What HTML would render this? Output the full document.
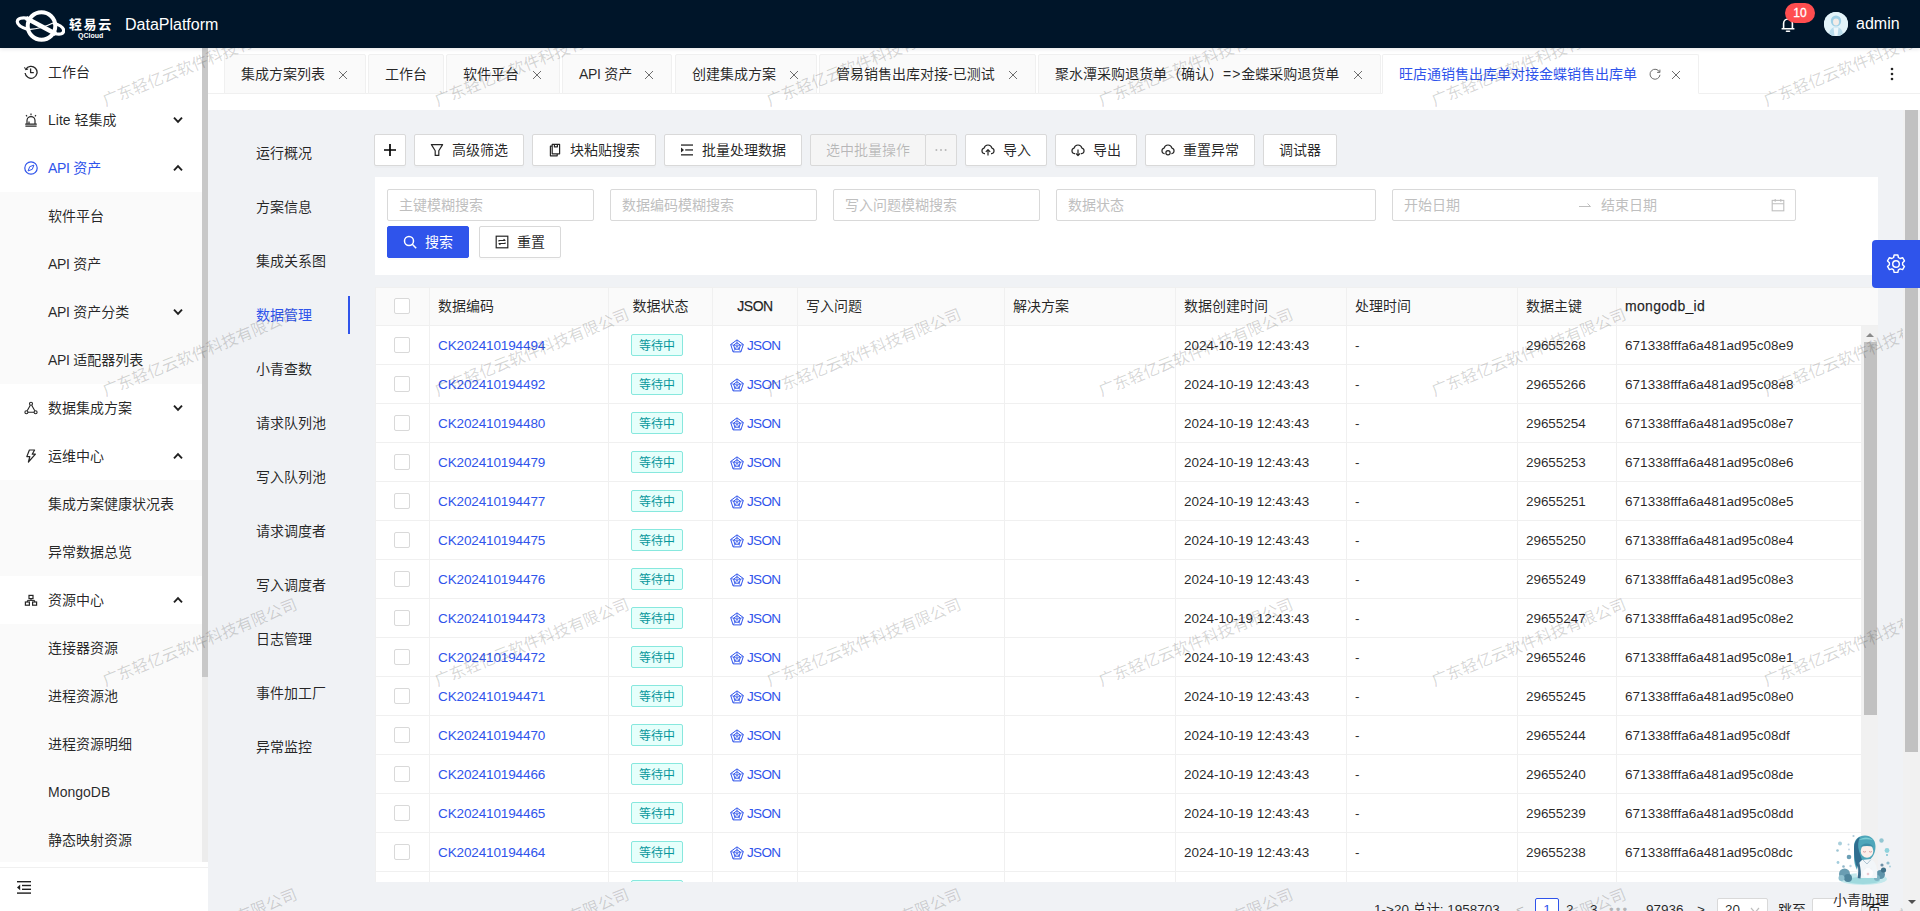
<!DOCTYPE html>
<html lang="zh-CN">
<head>
<meta charset="utf-8">
<title>DataPlatform</title>
<style>
*{box-sizing:border-box;margin:0;padding:0}
html,body{width:1920px;height:911px;overflow:hidden}
body{position:relative;background:#f0f2f5;font:14px/22px "Liberation Sans","Noto Sans CJK SC",sans-serif;color:rgba(0,0,0,.85)}
a{color:#2f54eb;text-decoration:none}
svg{display:block}
.abs{position:absolute}

/* ---------- header ---------- */
#hd{position:absolute;left:0;top:0;width:1920px;height:48px;background:#001529;z-index:30;box-shadow:0 1px 4px rgba(0,21,41,.12)}
#hd .logo{position:absolute;left:15px;top:9px;width:50px;height:34px}
#hd .brand{position:absolute;left:69px;top:15px;font-size:13px;line-height:20px;font-weight:700;color:#fff;letter-spacing:1.6px;white-space:nowrap}
#hd .qc{position:absolute;left:78px;top:31px;font-size:7px;line-height:9px;font-weight:700;color:#fff;white-space:nowrap}
#hd .title{position:absolute;left:125px;top:13px;font-size:16px;line-height:24px;color:#fff;white-space:nowrap}
#hd .bell{position:absolute;left:1780px;top:16px;width:16px;height:17px}
#hd .badge{position:absolute;left:1785px;top:3px;width:30px;height:20px;border-radius:10px;background:#ff4d4f;color:#fff;font-size:12px;line-height:20px;text-align:center;-webkit-text-stroke:.3px #fff}
#hd .avatar{position:absolute;left:1824px;top:12px;width:24px;height:24px;border-radius:50%;overflow:hidden;background:#dff1f8}
#hd .user{position:absolute;left:1856px;top:12px;font-size:16px;line-height:24px;color:#fff}

/* ---------- sidebar ---------- */
#sd{position:absolute;left:0;top:48px;width:208px;height:863px;background:#fff;z-index:20}
#sd .mi{position:absolute;left:0;width:202px;height:48px;line-height:48px;padding-left:48px;white-space:nowrap}
#sd .sub{position:absolute;left:0;width:202px;background:#fafafa}
#sd .mi.on{color:#2f54eb}
#sd .ic{position:absolute;left:24px;top:17px;width:14px;height:14px}
#sd .ar{position:absolute;left:173px;top:20px;width:10px;height:8px}
#sd .sbt{position:absolute;left:202px;top:0;width:6px;height:814px;background:#ececec}
#sd .sbh{position:absolute;left:202px;top:0;width:6px;height:629px;background:#c8c8c8}
#sd .foot{position:absolute;left:0;top:819px;width:208px;height:44px;border-top:1px solid #f0f0f0;background:#fff}
#sd .foot svg{position:absolute;left:17px;top:13px;width:14px;height:13px}

/* ---------- tabs ---------- */
#tb{position:absolute;left:208px;top:48px;width:1712px;height:62px;background:#fff;z-index:10}
#tb .line{position:absolute;left:0;top:45px;width:1712px;height:1px;background:#f0f0f0}
#tb .t{position:absolute;top:6px;height:40px;padding:8px 0 0 16px;border:1px solid #f0f0f0;background:#fafafa;border-radius:2px 2px 0 0;white-space:nowrap;line-height:22px}
#tb .t.on{background:#fff;border-bottom-color:#fff;color:#2f54eb}
#tb .x{position:absolute;top:15px;width:10px;height:10px}
#tb .more{position:absolute;left:1682px;top:19px;width:4px;height:14px}

/* ---------- inner menu ---------- */
#im .it{position:absolute;left:256px;height:22px;white-space:nowrap}
#im .it.on{color:#2f54eb}
#im .bar{position:absolute;left:348px;top:296px;width:2px;height:38px;background:#2f54eb}

/* ---------- buttons ---------- */
.btn{position:absolute;top:134px;height:32px;background:#fff;border:1px solid #d9d9d9;border-radius:2px;box-shadow:0 2px 0 rgba(0,0,0,.015);line-height:22px;padding:4px 0 0 15px;white-space:nowrap}
.btn svg{position:absolute;left:15px;top:8px;width:14px;height:14px}
.btn.i{padding-left:37px}
.btn.dis{background:#f5f5f5;color:rgba(0,0,0,.25);box-shadow:none}
.btn.pri{background:#2f54eb;border-color:#2f54eb;color:#fff}

/* ---------- search card ---------- */
#sc{position:absolute;left:375px;top:177px;width:1503px;height:98px;background:#fff}
.inp{position:absolute;top:12px;height:32px;border:1px solid #d9d9d9;border-radius:2px;background:#fff;padding:4px 11px;color:#bfbfbf;white-space:nowrap}

/* ---------- table ---------- */
#th{position:absolute;left:375px;top:287px;width:1503px;height:39px;background:#fafafa;border-top:1px solid #f0f0f0;border-bottom:1px solid #f0f0f0;border-left:1px solid #f0f0f0}
#th .h{position:absolute;top:0;height:37px;padding:7px 8px 0;border-right:1px solid #f0f0f0;white-space:nowrap}
.tbody{position:absolute;left:375px;top:326px;width:1486px;height:556px;overflow:hidden;background:#fff;border-left:1px solid #f0f0f0}
.tr{position:relative;height:39px;border-bottom:1px solid #f0f0f0}
.td{position:absolute;top:0;height:38px;padding:8px 8px 0;border-right:1px solid #f0f0f0;white-space:nowrap}
.c0{left:0;width:54px}.c1{left:54px;width:179px}.c2{left:233px;width:104px}.c3{left:337px;width:85px}.c4{left:422px;width:207px}
.c5{left:629px;width:171px}.c6{left:800px;width:171px}.c7{left:971px;width:171px}.c8{left:1142px;width:99px}.c9{left:1241px;width:245px}
.cb{position:absolute;left:18px;top:11px;width:16px;height:16px;border:1px solid #d9d9d9;border-radius:2px;background:#fff}
.tag{position:absolute;left:22px;top:8px;width:52px;height:22px;border:1px solid #87e8de;background:#e6fffb;color:#08979c;border-radius:2px;font-size:12px;line-height:22px;text-align:center}
.c3 a{position:absolute;left:17px;top:8px;height:22px}
.c3 a span{position:absolute;left:17px;top:1px;letter-spacing:-.65px}
.radar{position:absolute;left:0;top:5px;width:14px;height:14px;fill:none;stroke:#2f54eb;stroke-width:1;stroke-linejoin:round}
#vs{position:absolute;left:1861px;top:326px;width:17px;height:556px;background:#f1f1f1}
#vs .thumb{position:absolute;left:3px;top:16px;width:13px;height:373px;background:#c1c1c1}
#vs .up{position:absolute;left:5px;top:7px;width:0;height:0;border:4px solid transparent;border-top:0;border-bottom:4px solid #8a8a8a}

/* ---------- misc ---------- */
#ms{position:absolute;left:1903px;top:110px;width:17px;height:801px;background:#f1f1f1;z-index:26}
#ms .thumb{position:absolute;left:2px;top:0;width:13px;height:642px;background:#c1c1c1}
#ms .dn{position:absolute;left:5px;top:790px;width:0;height:0;border:4px solid transparent;border-bottom:0;border-top:4px solid #505050}
#gear{position:absolute;left:1872px;top:240px;width:48px;height:48px;background:#2f54eb;border-radius:4px 0 0 4px;z-index:40}
#gear svg{position:absolute;left:13px;top:13px;width:22px;height:22px}
#pg{position:absolute;left:-1px;top:898px;width:1920px;height:24px;font-size:13.5px;line-height:24px}
#pg span{position:absolute;top:0;white-space:nowrap}
#xq{position:absolute;left:1830px;top:832px;width:62px;height:79px;z-index:41}
#xq .lbl{position:absolute;left:0;top:57px;width:62px;text-align:center;font-size:14px;line-height:22px;white-space:nowrap}
.wm{position:absolute;z-index:25;font-size:16px;line-height:16px;white-space:nowrap;pointer-events:none}

body{font-variant-ligatures:none}
.c1 a,.c6,.c7,.c8,.c9,.c3 a span{font-size:13.5px}
.c1 a{letter-spacing:-.12px}.c8{letter-spacing:-.05px}.c9{letter-spacing:.04px}
.sb{-webkit-text-stroke:.25px currentColor}
.l{letter-spacing:-.4px}
.wm{width:208px;height:16px;transform-origin:50% 50%;transform:rotate(-22deg);color:rgba(0,0,0,.17);text-align:center}
.c6,.c7,.c8,.c9{padding-top:9px}

</style>
</head>
<body>
<div id="hd">
  <svg class="logo" viewBox="0 0 50 34" fill="none" stroke="#fff">
    <circle cx="26.5" cy="17" r="13.8" stroke-width="4"/>
    <path d="M13.500 9.500C7 8 2.500 9.500 2.300 12.500 2 16 8 19 13 20.500M39.500 24.500c6.500 1.500 9 0 9.200-2.500C49 19 45 16 38 13.800" stroke-width="3.200"/>
    <path d="M11 9 41 25" stroke-width="4.600"/>
    <path d="M14 20.500c8-.5 16-2.500 24-6.500" stroke-width="1.300"/>
  </svg>
  <div class="brand">轻易云</div>
  <div class="qc">QCloud</div>
  <div class="title">DataPlatform</div>
  <svg class="bell" viewBox="0 0 16 17" fill="none" stroke="#fff" stroke-width="1.6" stroke-linejoin="round"><path d="M3.6 12.6V7.4a4.4 4.4 0 0 1 8.8 0v5.2M1.6 12.8h12.8"/><path d="M6.5 15.3h3" stroke-linecap="round"/></svg>
  <div class="badge">10</div>
  <div class="avatar"><svg viewBox="0 0 24 24" width="24" height="24"><rect width="24" height="24" fill="#e3f4fa"/><ellipse cx="12" cy="9" rx="5.2" ry="5.6" fill="#9fd0e6"/><ellipse cx="12" cy="10" rx="3" ry="3.4" fill="#f3ece8"/><path d="M5 24c0-6 3-9 7-9s7 3 7 9z" fill="#b9dcec"/><path d="M9.5 15.5h5l-1 8.5h-3z" fill="#eef7fb"/></svg></div>
  <div class="user">admin</div>
</div>

<div id="sd">
  <div class="sub" style="top:144px;height:192px"></div>
  <div class="sub" style="top:432px;height:96px"></div>
  <div class="sub" style="top:576px;height:238px"></div>

  <div class="mi" style="top:0">
    <svg class="ic" viewBox="0 0 14 14" fill="none" stroke="#262626" stroke-width="1.3"><path d="M1.800 4.400A6 6 0 1 1 1.100 8"/><path d="M.6 2.200l1 2.600 2.600-.8" stroke-width="1"/><path d="M6.600 3.600V7.600h3.200" stroke-linejoin="round"/></svg>工作台</div>
  <div class="mi" style="top:48px">
    <svg class="ic" viewBox="0 0 14 14" fill="none" stroke="#262626" stroke-width="1.2"><path d="M3 11V7.6a4 4 0 0 1 8 0V11M1.4 13.2h11.2M1.2 11.2h11.6M7 .6v1.6M2 2.2l1.1 1.1M12 2.2l-1.1 1.1M5 10.8V8.4"/></svg>Lite 轻集成
    <svg class="ar" viewBox="0 0 10 8" fill="none" stroke="#1f1f1f" stroke-width="1.9"><path d="M1 1.6 5 5.8 9 1.6"/></svg></div>
  <div class="mi on" style="top:96px">
    <svg class="ic" viewBox="0 0 14 14" fill="none" stroke="#2f54eb" stroke-width="1.2"><circle cx="7" cy="7" r="6.2"/><path d="M9.9 4.1 8.3 8.3 4.1 9.9 5.7 5.7Z" stroke-width="1" stroke-linejoin="round"/></svg><span class="l">API</span> 资产
    <svg class="ar" viewBox="0 0 10 8" fill="none" stroke="#1f1f1f" stroke-width="1.9"><path d="M1 6.4 5 2.2 9 6.4"/></svg></div>
  <div class="mi" style="top:144px">软件平台</div>
  <div class="mi" style="top:192px"><span class="l">API</span> 资产</div>
  <div class="mi" style="top:240px"><span class="l">API</span> 资产分类
    <svg class="ar" viewBox="0 0 10 8" fill="none" stroke="#1f1f1f" stroke-width="1.9"><path d="M1 1.6 5 5.8 9 1.6"/></svg></div>
  <div class="mi" style="top:288px"><span class="l">API</span> 适配器列表</div>
  <div class="mi" style="top:336px">
    <svg class="ic" viewBox="0 0 14 14" fill="none" stroke="#262626" stroke-width="1.1"><circle cx="7" cy="2.800" r="1.500"/><circle cx="2.400" cy="11.200" r="1.500"/><circle cx="11.600" cy="11.200" r="1.500"/><path d="M6.300 4.200 3.200 9.800M7.700 4.200l3.100 5.600M4 11.200h6"/></svg>数据集成方案
    <svg class="ar" viewBox="0 0 10 8" fill="none" stroke="#1f1f1f" stroke-width="1.9"><path d="M1 1.6 5 5.8 9 1.6"/></svg></div>
  <div class="mi" style="top:384px">
    <svg class="ic" viewBox="0 0 14 14" fill="none" stroke="#262626" stroke-width="1.2" stroke-linejoin="round"><path d="M5.4 1h5.2L8.2 5.2h3.2L4.4 13l1.4-5.4H2.8Z"/></svg>运维中心
    <svg class="ar" viewBox="0 0 10 8" fill="none" stroke="#1f1f1f" stroke-width="1.9"><path d="M1 6.4 5 2.2 9 6.4"/></svg></div>
  <div class="mi" style="top:432px">集成方案健康状况表</div>
  <div class="mi" style="top:480px">异常数据总览</div>
  <div class="mi" style="top:528px">
    <svg class="ic" viewBox="0 0 14 14" fill="none" stroke="#262626" stroke-width="1.2"><rect x="5" y="2.400" width="4" height="3.200"/><rect x="1.400" y="9" width="4" height="3.200"/><rect x="8.600" y="9" width="4" height="3.200"/><path d="M7 5.600v1.800M3.400 9V7.400h7.200V9" stroke-width="1"/></svg>资源中心
    <svg class="ar" viewBox="0 0 10 8" fill="none" stroke="#1f1f1f" stroke-width="1.9"><path d="M1 6.4 5 2.2 9 6.4"/></svg></div>
  <div class="mi" style="top:576px">连接器资源</div>
  <div class="mi" style="top:624px">进程资源池</div>
  <div class="mi" style="top:672px">进程资源明细</div>
  <div class="mi" style="top:720px">MongoDB</div>
  <div class="mi" style="top:768px">静态映射资源</div>
  <div class="sbt"></div><div class="sbh"></div>
  <div class="foot"><svg viewBox="0 0 14 13" fill="#1f1f1f"><rect x="0" y="0" width="14" height="1.4"/><rect x="5" y="3.8" width="9" height="1.4"/><rect x="5" y="7.6" width="9" height="1.4"/><rect x="0" y="11.4" width="14" height="1.4"/><path d="M3.2 3.6v5.6L0 6.4z"/></svg></div>
</div>

<div id="tb">
  <div class="line"></div>
  <div class="t" style="left:16px;width:142px">集成方案列表<svg class="x" style="right:17px" viewBox="0 0 10 10" stroke="#6e6e6e" stroke-width="1"><path d="M1 1l8 8M9 1 1 9"/></svg></div>
  <div class="t" style="left:160px;width:76px">工作台</div>
  <div class="t" style="left:238px;width:114px">软件平台<svg class="x" style="right:17px" viewBox="0 0 10 10" stroke="#6e6e6e" stroke-width="1"><path d="M1 1l8 8M9 1 1 9"/></svg></div>
  <div class="t" style="left:354px;width:110px"><span class="l">API</span> 资产<svg class="x" style="right:17px" viewBox="0 0 10 10" stroke="#6e6e6e" stroke-width="1"><path d="M1 1l8 8M9 1 1 9"/></svg></div>
  <div class="t" style="left:467px;width:142px">创建集成方案<svg class="x" style="right:17px" viewBox="0 0 10 10" stroke="#6e6e6e" stroke-width="1"><path d="M1 1l8 8M9 1 1 9"/></svg></div>
  <div class="t" style="left:611px;width:217px">管易销售出库对接-已测试<svg class="x" style="right:17px" viewBox="0 0 10 10" stroke="#6e6e6e" stroke-width="1"><path d="M1 1l8 8M9 1 1 9"/></svg></div>
  <div class="t" style="left:830px;width:343px">聚水潭采购退货单（确认）<span style="letter-spacing:1px">=&gt;</span>金蝶采购退货单<svg class="x" style="right:17px" viewBox="0 0 10 10" stroke="#6e6e6e" stroke-width="1"><path d="M1 1l8 8M9 1 1 9"/></svg></div>
  <div class="t on" style="left:1174px;width:317px">旺店通销售出库单对接金蝶销售出库单<svg class="x" style="right:37px;width:12px;height:12px;top:13px" viewBox="0 0 12 12" fill="none" stroke="#6e6e6e" stroke-width="1"><path d="M10.6 4.2A5 5 0 1 0 11 6.8M10.9 1.6v2.8H8.1"/></svg><svg class="x" style="right:17px" viewBox="0 0 10 10" stroke="#6e6e6e" stroke-width="1"><path d="M1 1l8 8M9 1 1 9"/></svg></div>
  <svg class="more" viewBox="0 0 4 14" fill="#262626"><circle cx="2" cy="2" r="1.3"/><circle cx="2" cy="7" r="1.3"/><circle cx="2" cy="12" r="1.3"/></svg>
</div>

<div id="im">
  <div class="it" style="top:142px">运行概况</div>
  <div class="it" style="top:196px">方案信息</div>
  <div class="it" style="top:250px">集成关系图</div>
  <div class="it on" style="top:304px">数据管理</div>
  <div class="bar"></div>
  <div class="it" style="top:358px">小青查数</div>
  <div class="it" style="top:412px">请求队列池</div>
  <div class="it" style="top:466px">写入队列池</div>
  <div class="it" style="top:520px">请求调度者</div>
  <div class="it" style="top:574px">写入调度者</div>
  <div class="it" style="top:628px">日志管理</div>
  <div class="it" style="top:682px">事件加工厂</div>
  <div class="it" style="top:736px">异常监控</div>
</div>

<div class="btn" style="left:374px;width:32px;padding:0"><svg style="left:8px;top:8px" viewBox="0 0 14 14" stroke="#000" stroke-width="1.7"><path d="M7 1v12M1 7h12"/></svg></div>
<div class="btn i" style="left:414px;width:110px"><svg viewBox="0 0 14 14" fill="none" stroke="#262626" stroke-width="1.2" stroke-linejoin="round"><path d="M1.4 1.6h11.2L8.8 7.8v4.6H5.2V7.8Z"/></svg>高级筛选</div>
<div class="btn i" style="left:532px;width:124px"><svg viewBox="0 0 14 14" fill="none" stroke="#262626" stroke-width="1.2" stroke-linejoin="round"><path d="M4.2 3.2H2.4v9.6h6.8V11M4.2 1.4h7.4v9.4H4.2ZM6.4 1.4v2.4h3V1.4"/></svg>块粘贴搜索</div>
<div class="btn i" style="left:664px;width:138px"><svg viewBox="0 0 14 14" fill="#262626"><rect x="1" y="1.4" width="12" height="1.3"/><rect x="5.2" y="6.3" width="7.8" height="1.3"/><rect x="1" y="11.2" width="12" height="1.3"/><path d="M1 4.6 4 7 1 9.4z"/></svg>批量处理数据</div>
<div class="btn dis" style="left:810px;width:116px">选中批量操作</div>
<div class="btn dis" style="left:925px;width:32px;padding:0"><svg style="left:8px;top:8px" viewBox="0 0 14 14" fill="rgba(0,0,0,.25)"><circle cx="2.400" cy="7" r="1"/><circle cx="7" cy="7" r="1"/><circle cx="11.600" cy="7" r="1"/></svg></div>
<div class="btn i" style="left:965px;width:82px"><svg viewBox="0 0 14 14" fill="none" stroke="#262626" stroke-width="1.2" stroke-linejoin="round"><path d="M4 10.6H3.4a2.8 2.8 0 0 1-.3-5.5 4 4 0 0 1 7.8 0 2.8 2.8 0 0 1-.3 5.500H10M7 12.6V6.8M4.8 8.8 7 6.6l2.200 2.200"/></svg>导入</div>
<div class="btn i" style="left:1055px;width:82px"><svg viewBox="0 0 14 14" fill="none" stroke="#262626" stroke-width="1.2" stroke-linejoin="round"><path d="M4 10.6H3.4a2.8 2.8 0 0 1-.3-5.5 4 4 0 0 1 7.8 0 2.8 2.8 0 0 1-.3 5.500H10M7 6.600V12.400M4.800 10.400 7 12.600l2.200-2.200"/></svg>导出</div>
<div class="btn i" style="left:1145px;width:110px"><svg viewBox="0 0 14 14" fill="none" stroke="#262626" stroke-width="1.2" stroke-linejoin="round"><path d="M3.600 10.600H3.400a2.800 2.800 0 0 1-.3-5.500 4 4 0 0 1 7.800 0 2.800 2.800 0 0 1-.3 5.500H10.400"/><circle cx="7" cy="9.800" r="2.100"/></svg>重置异常</div>
<div class="btn" style="left:1263px;width:74px">调试器</div>

<div id="sc">
  <div class="inp" style="left:12px;width:207px">主键模糊搜索</div>
  <div class="inp" style="left:235px;width:207px">数据编码模糊搜索</div>
  <div class="inp" style="left:458px;width:207px">写入问题模糊搜索</div>
  <div class="inp" style="left:681px;width:320px">数据状态</div>
  <div class="inp" style="left:1017px;width:404px">开始日期<span style="position:absolute;left:208px;top:4px">结束日期</span>
    <svg style="position:absolute;left:185px;top:9px;width:14px;height:12px" viewBox="0 0 14 12" fill="none" stroke="#bfbfbf" stroke-width="1"><path d="M1 7.500h11.500M9.500 4.500l3 3"/></svg>
    <svg style="position:absolute;left:378px;top:8px;width:14px;height:14px" viewBox="0 0 14 14" fill="none" stroke="#bfbfbf" stroke-width="1.100"><rect x="1.200" y="2.400" width="11.600" height="10.400"/><path d="M1.200 5.800h11.600M4.200 1v2.800M9.800 1v2.800"/></svg>
  </div>
  <div class="btn pri i" style="left:12px;top:49px;width:82px"><svg viewBox="0 0 14 14" fill="none" stroke="#fff" stroke-width="1.500"><circle cx="6" cy="6" r="4.500"/><path d="M9.300 9.300 13.200 13.200"/></svg>搜索</div>
  <div class="btn i" style="left:104px;top:49px;width:82px"><svg viewBox="0 0 14 14" fill="none" stroke="#262626" stroke-width="1.200"><rect x="1.200" y="1.200" width="11.600" height="11.600"/><path d="M3.900 6.500V5.500h6.100L8.600 4.100M10.100 7.500V8.500H4l1.400 1.400" stroke-width="1.100" stroke-linejoin="round"/></svg>重置</div>
</div>

<div id="th">
  <div class="h" style="left:0;width:54px"><i class="cb" style="top:10px"></i></div>
  <div class="h" style="left:54px;width:179px">数据编码</div>
  <div class="h" style="left:233px;width:104px;text-align:center">数据状态</div>
  <div class="h" style="left:337px;width:85px;text-align:center"><span class="sb" style="letter-spacing:-.5px">JSON</span></div>
  <div class="h" style="left:422px;width:207px">写入问题</div>
  <div class="h" style="left:629px;width:171px">解决方案</div>
  <div class="h" style="left:800px;width:171px">数据创建时间</div>
  <div class="h" style="left:971px;width:171px">处理时间</div>
  <div class="h" style="left:1142px;width:99px">数据主键</div>
  <div class="h" style="left:1241px;width:261px;border-right:0"><span class="sb" style="letter-spacing:.3px">mongodb_id</span></div>
</div>

<div class="tbody">
<div class="tr"><div class="td c0"><i class="cb"></i></div><div class="td c1"><a>CK202410194494</a></div><div class="td c2"><span class="tag">等待中</span></div><div class="td c3"><a><svg class="radar" viewBox="0 0 14 14"><path d="M7 .9 13.3 5.5 10.9 12.9H3.1L.7 5.5Z"/><path d="M7 3.7 10.4 6.2 9.1 10.2H4.9L3.6 6.2Z"/><path d="M7 .9V7M13.3 5.5 7 7M10.9 12.9 7 7M3.1 12.9 7 7M.7 5.5 7 7" stroke-width=".7"/></svg><span>JSON</span></a></div><div class="td c4"></div><div class="td c5"></div><div class="td c6">2024-10-19 12:43:43</div><div class="td c7">-</div><div class="td c8">29655268</div><div class="td c9">671338fffa6a481ad95c08e9</div></div>
<div class="tr"><div class="td c0"><i class="cb"></i></div><div class="td c1"><a>CK202410194492</a></div><div class="td c2"><span class="tag">等待中</span></div><div class="td c3"><a><svg class="radar" viewBox="0 0 14 14"><path d="M7 .9 13.3 5.5 10.9 12.9H3.1L.7 5.5Z"/><path d="M7 3.7 10.4 6.2 9.1 10.2H4.9L3.6 6.2Z"/><path d="M7 .9V7M13.3 5.5 7 7M10.9 12.9 7 7M3.1 12.9 7 7M.7 5.5 7 7" stroke-width=".7"/></svg><span>JSON</span></a></div><div class="td c4"></div><div class="td c5"></div><div class="td c6">2024-10-19 12:43:43</div><div class="td c7">-</div><div class="td c8">29655266</div><div class="td c9">671338fffa6a481ad95c08e8</div></div>
<div class="tr"><div class="td c0"><i class="cb"></i></div><div class="td c1"><a>CK202410194480</a></div><div class="td c2"><span class="tag">等待中</span></div><div class="td c3"><a><svg class="radar" viewBox="0 0 14 14"><path d="M7 .9 13.3 5.5 10.9 12.9H3.1L.7 5.5Z"/><path d="M7 3.7 10.4 6.2 9.1 10.2H4.9L3.6 6.2Z"/><path d="M7 .9V7M13.3 5.5 7 7M10.9 12.9 7 7M3.1 12.9 7 7M.7 5.5 7 7" stroke-width=".7"/></svg><span>JSON</span></a></div><div class="td c4"></div><div class="td c5"></div><div class="td c6">2024-10-19 12:43:43</div><div class="td c7">-</div><div class="td c8">29655254</div><div class="td c9">671338fffa6a481ad95c08e7</div></div>
<div class="tr"><div class="td c0"><i class="cb"></i></div><div class="td c1"><a>CK202410194479</a></div><div class="td c2"><span class="tag">等待中</span></div><div class="td c3"><a><svg class="radar" viewBox="0 0 14 14"><path d="M7 .9 13.3 5.5 10.9 12.9H3.1L.7 5.5Z"/><path d="M7 3.7 10.4 6.2 9.1 10.2H4.9L3.6 6.2Z"/><path d="M7 .9V7M13.3 5.5 7 7M10.9 12.9 7 7M3.1 12.9 7 7M.7 5.5 7 7" stroke-width=".7"/></svg><span>JSON</span></a></div><div class="td c4"></div><div class="td c5"></div><div class="td c6">2024-10-19 12:43:43</div><div class="td c7">-</div><div class="td c8">29655253</div><div class="td c9">671338fffa6a481ad95c08e6</div></div>
<div class="tr"><div class="td c0"><i class="cb"></i></div><div class="td c1"><a>CK202410194477</a></div><div class="td c2"><span class="tag">等待中</span></div><div class="td c3"><a><svg class="radar" viewBox="0 0 14 14"><path d="M7 .9 13.3 5.5 10.9 12.9H3.1L.7 5.5Z"/><path d="M7 3.7 10.4 6.2 9.1 10.2H4.9L3.6 6.2Z"/><path d="M7 .9V7M13.3 5.5 7 7M10.9 12.9 7 7M3.1 12.9 7 7M.7 5.5 7 7" stroke-width=".7"/></svg><span>JSON</span></a></div><div class="td c4"></div><div class="td c5"></div><div class="td c6">2024-10-19 12:43:43</div><div class="td c7">-</div><div class="td c8">29655251</div><div class="td c9">671338fffa6a481ad95c08e5</div></div>
<div class="tr"><div class="td c0"><i class="cb"></i></div><div class="td c1"><a>CK202410194475</a></div><div class="td c2"><span class="tag">等待中</span></div><div class="td c3"><a><svg class="radar" viewBox="0 0 14 14"><path d="M7 .9 13.3 5.5 10.9 12.9H3.1L.7 5.5Z"/><path d="M7 3.7 10.4 6.2 9.1 10.2H4.9L3.6 6.2Z"/><path d="M7 .9V7M13.3 5.5 7 7M10.9 12.9 7 7M3.1 12.9 7 7M.7 5.5 7 7" stroke-width=".7"/></svg><span>JSON</span></a></div><div class="td c4"></div><div class="td c5"></div><div class="td c6">2024-10-19 12:43:43</div><div class="td c7">-</div><div class="td c8">29655250</div><div class="td c9">671338fffa6a481ad95c08e4</div></div>
<div class="tr"><div class="td c0"><i class="cb"></i></div><div class="td c1"><a>CK202410194476</a></div><div class="td c2"><span class="tag">等待中</span></div><div class="td c3"><a><svg class="radar" viewBox="0 0 14 14"><path d="M7 .9 13.3 5.5 10.9 12.9H3.1L.7 5.5Z"/><path d="M7 3.7 10.4 6.2 9.1 10.2H4.9L3.6 6.2Z"/><path d="M7 .9V7M13.3 5.5 7 7M10.9 12.9 7 7M3.1 12.9 7 7M.7 5.5 7 7" stroke-width=".7"/></svg><span>JSON</span></a></div><div class="td c4"></div><div class="td c5"></div><div class="td c6">2024-10-19 12:43:43</div><div class="td c7">-</div><div class="td c8">29655249</div><div class="td c9">671338fffa6a481ad95c08e3</div></div>
<div class="tr"><div class="td c0"><i class="cb"></i></div><div class="td c1"><a>CK202410194473</a></div><div class="td c2"><span class="tag">等待中</span></div><div class="td c3"><a><svg class="radar" viewBox="0 0 14 14"><path d="M7 .9 13.3 5.5 10.9 12.9H3.1L.7 5.5Z"/><path d="M7 3.7 10.4 6.2 9.1 10.2H4.9L3.6 6.2Z"/><path d="M7 .9V7M13.3 5.5 7 7M10.9 12.9 7 7M3.1 12.9 7 7M.7 5.5 7 7" stroke-width=".7"/></svg><span>JSON</span></a></div><div class="td c4"></div><div class="td c5"></div><div class="td c6">2024-10-19 12:43:43</div><div class="td c7">-</div><div class="td c8">29655247</div><div class="td c9">671338fffa6a481ad95c08e2</div></div>
<div class="tr"><div class="td c0"><i class="cb"></i></div><div class="td c1"><a>CK202410194472</a></div><div class="td c2"><span class="tag">等待中</span></div><div class="td c3"><a><svg class="radar" viewBox="0 0 14 14"><path d="M7 .9 13.3 5.5 10.9 12.9H3.1L.7 5.5Z"/><path d="M7 3.7 10.4 6.2 9.1 10.2H4.9L3.6 6.2Z"/><path d="M7 .9V7M13.3 5.5 7 7M10.9 12.9 7 7M3.1 12.9 7 7M.7 5.5 7 7" stroke-width=".7"/></svg><span>JSON</span></a></div><div class="td c4"></div><div class="td c5"></div><div class="td c6">2024-10-19 12:43:43</div><div class="td c7">-</div><div class="td c8">29655246</div><div class="td c9">671338fffa6a481ad95c08e1</div></div>
<div class="tr"><div class="td c0"><i class="cb"></i></div><div class="td c1"><a>CK202410194471</a></div><div class="td c2"><span class="tag">等待中</span></div><div class="td c3"><a><svg class="radar" viewBox="0 0 14 14"><path d="M7 .9 13.3 5.5 10.9 12.9H3.1L.7 5.5Z"/><path d="M7 3.7 10.4 6.2 9.1 10.2H4.9L3.6 6.2Z"/><path d="M7 .9V7M13.3 5.5 7 7M10.9 12.9 7 7M3.1 12.9 7 7M.7 5.5 7 7" stroke-width=".7"/></svg><span>JSON</span></a></div><div class="td c4"></div><div class="td c5"></div><div class="td c6">2024-10-19 12:43:43</div><div class="td c7">-</div><div class="td c8">29655245</div><div class="td c9">671338fffa6a481ad95c08e0</div></div>
<div class="tr"><div class="td c0"><i class="cb"></i></div><div class="td c1"><a>CK202410194470</a></div><div class="td c2"><span class="tag">等待中</span></div><div class="td c3"><a><svg class="radar" viewBox="0 0 14 14"><path d="M7 .9 13.3 5.5 10.9 12.9H3.1L.7 5.5Z"/><path d="M7 3.7 10.4 6.2 9.1 10.2H4.9L3.6 6.2Z"/><path d="M7 .9V7M13.3 5.5 7 7M10.9 12.9 7 7M3.1 12.9 7 7M.7 5.5 7 7" stroke-width=".7"/></svg><span>JSON</span></a></div><div class="td c4"></div><div class="td c5"></div><div class="td c6">2024-10-19 12:43:43</div><div class="td c7">-</div><div class="td c8">29655244</div><div class="td c9">671338fffa6a481ad95c08df</div></div>
<div class="tr"><div class="td c0"><i class="cb"></i></div><div class="td c1"><a>CK202410194466</a></div><div class="td c2"><span class="tag">等待中</span></div><div class="td c3"><a><svg class="radar" viewBox="0 0 14 14"><path d="M7 .9 13.3 5.5 10.9 12.9H3.1L.7 5.5Z"/><path d="M7 3.7 10.4 6.2 9.1 10.2H4.9L3.6 6.2Z"/><path d="M7 .9V7M13.3 5.5 7 7M10.9 12.9 7 7M3.1 12.9 7 7M.7 5.5 7 7" stroke-width=".7"/></svg><span>JSON</span></a></div><div class="td c4"></div><div class="td c5"></div><div class="td c6">2024-10-19 12:43:43</div><div class="td c7">-</div><div class="td c8">29655240</div><div class="td c9">671338fffa6a481ad95c08de</div></div>
<div class="tr"><div class="td c0"><i class="cb"></i></div><div class="td c1"><a>CK202410194465</a></div><div class="td c2"><span class="tag">等待中</span></div><div class="td c3"><a><svg class="radar" viewBox="0 0 14 14"><path d="M7 .9 13.3 5.5 10.9 12.9H3.1L.7 5.5Z"/><path d="M7 3.7 10.4 6.2 9.1 10.2H4.9L3.6 6.2Z"/><path d="M7 .9V7M13.3 5.5 7 7M10.9 12.9 7 7M3.1 12.9 7 7M.7 5.5 7 7" stroke-width=".7"/></svg><span>JSON</span></a></div><div class="td c4"></div><div class="td c5"></div><div class="td c6">2024-10-19 12:43:43</div><div class="td c7">-</div><div class="td c8">29655239</div><div class="td c9">671338fffa6a481ad95c08dd</div></div>
<div class="tr"><div class="td c0"><i class="cb"></i></div><div class="td c1"><a>CK202410194464</a></div><div class="td c2"><span class="tag">等待中</span></div><div class="td c3"><a><svg class="radar" viewBox="0 0 14 14"><path d="M7 .9 13.3 5.5 10.9 12.9H3.1L.7 5.5Z"/><path d="M7 3.7 10.4 6.2 9.1 10.2H4.9L3.6 6.2Z"/><path d="M7 .9V7M13.3 5.5 7 7M10.9 12.9 7 7M3.1 12.9 7 7M.7 5.5 7 7" stroke-width=".7"/></svg><span>JSON</span></a></div><div class="td c4"></div><div class="td c5"></div><div class="td c6">2024-10-19 12:43:43</div><div class="td c7">-</div><div class="td c8">29655238</div><div class="td c9">671338fffa6a481ad95c08dc</div></div>
<div class="tr"><div class="td c0"><i class="cb"></i></div><div class="td c1"><a>CK202410194463</a></div><div class="td c2"><span class="tag">等待中</span></div><div class="td c3"><a><svg class="radar" viewBox="0 0 14 14"><path d="M7 .9 13.3 5.5 10.9 12.9H3.1L.7 5.5Z"/><path d="M7 3.7 10.4 6.2 9.1 10.2H4.9L3.6 6.2Z"/><path d="M7 .9V7M13.3 5.5 7 7M10.9 12.9 7 7M3.1 12.9 7 7M.7 5.5 7 7" stroke-width=".7"/></svg><span>JSON</span></a></div><div class="td c4"></div><div class="td c5"></div><div class="td c6">2024-10-19 12:43:43</div><div class="td c7">-</div><div class="td c8">29655237</div><div class="td c9">671338fffa6a481ad95c08db</div></div>
</div>
<div id="vs"><div class="up"></div><div class="thumb"></div></div>
<div id="ms"><div class="thumb"></div><div class="dn"></div></div>

<div id="gear"><svg viewBox="0 0 20 20" fill="none" stroke="#fff" stroke-width="1.300" stroke-linejoin="round"><circle cx="10" cy="10" r="3"/><path d="M8.300 1.800h3.400l.5 2.300 1.500.9 2.300-.7 1.700 2.900-1.700 1.600v1.800l1.700 1.600-1.700 2.900-2.300-.7-1.500.9-.5 2.300H8.300l-.5-2.300-1.500-.9-2.300.7-1.700-2.900L4 10.600V8.800L2.300 7.200 4 4.300l2.300.7 1.500-.9Z"/></svg></div>

<div id="pg">
  <span style="left:1375px">1-&gt;20 总计: 1958703</span>
  <span style="left:1517px;color:rgba(0,0,0,.25)">&lt;</span>
  <span style="left:1536px;width:24px;height:24px;border:1px solid #2f54eb;border-radius:2px;background:#fff;color:#2f54eb;text-align:center;line-height:22px">1</span>
  <span style="left:1567px">2</span>
  <span style="left:1591px">3</span>
  <span style="left:1610px;color:rgba(0,0,0,.25);letter-spacing:2px">•••</span>
  <span style="left:1647px">97936</span>
  <span style="left:1698px">&gt;</span>
  <span style="left:1718px;width:51px;height:24px;border:1px solid #d9d9d9;border-radius:2px;background:#fff;padding-left:7px;line-height:22px">20<svg style="position:absolute;left:32px;top:8px;width:10px;height:7px" viewBox="0 0 10 7" fill="none" stroke="#bfbfbf" stroke-width="1.200"><path d="M1 1l4 4.500L9 1"/></svg></span>
  <span style="left:1779px;font-size:14px">跳至</span>
  <span style="left:1813px;width:50px;height:24px;border:1px solid #d9d9d9;border-radius:2px;background:#fff"></span>
  <span style="left:1868px;font-size:14px">页</span>
</div>

<div id="xq">
  <svg style="position:absolute;left:6px;top:2px;width:58px;height:52px" viewBox="0 0 58 52">
    <ellipse cx="27" cy="45" rx="24" ry="6" fill="#c3e8ec"/>
    <ellipse cx="27" cy="46.500" rx="17" ry="3.500" fill="#9fd9de"/>
    <circle cx="8.500" cy="40" r="5.500" fill="#6a9db2"/><circle cx="12" cy="44" r="4" fill="#4f859c"/><circle cx="5.500" cy="44" r="3" fill="#8fc0cf"/>
    <circle cx="44.500" cy="40.500" r="4.500" fill="#5e93a9"/><circle cx="47.500" cy="36" r="2.600" fill="#3f7088"/><circle cx="41" cy="44" r="3" fill="#7fb4c4"/><circle cx="46" cy="31" r="1.600" fill="#6d8fa6"/>
    <path d="M18 13C18 5 23 1.500 29 1.500s10.500 4 10.500 11c0 4-1 7-2.500 9.500L33 27l-8 1-4 8c-2-4-3-8-3-13z" fill="#4ea6ba"/>
    <path d="M18 14c0-5 2-9 6-11-2 4-2.500 9-1 14l3 9-4 9c-3-5-4-13-4-21z" fill="#2f6d8f"/>
    <path d="M23 6c4-3.500 10-3.500 14 0-4-1-9-1-14 0z" fill="#7fd0d6"/>
    <ellipse cx="31" cy="17" rx="6.300" ry="6.800" fill="#fcefea"/>
    <path d="M24.500 13c2-4 9-5 13 0-4-1.500-9-1.500-13 0z" fill="#3f8fa8"/>
    <path d="M27 17.500q1.500 1.200 3 0M33 17.500q1.500 1.200 3 0" stroke="#c77f86" stroke-width=".7" fill="none"/>
    <path d="M21 44c-1-9 1-15 5-18l9-1c5 3 7 9 6 19z" fill="#f2f6f9"/>
    <path d="M21.500 30c1 4 1 9 0 14l3 .5c1-5 0-10-1-15.500z" fill="#3c6e8c"/>
    <path d="M27 26l4 4 4-4.500" stroke="#9db7c6" stroke-width=".8" fill="none"/>
    <circle cx="32" cy="39" r="5" fill="#fbfbfd"/><path d="M28.500 36l-.8-3 2.500 1.600zM35.500 36l.8-3-2.500 1.600z" fill="#f1f3f6"/><circle cx="32" cy="40" r="1.300" fill="#e9c9cf"/>
    <circle cx="4" cy="9.500" r="2" fill="#a9cfdc"/><circle cx="1.500" cy="16.500" r="1.300" fill="#9cc4d3"/><circle cx="13" cy="23" r="2.300" fill="#6b9fb6"/><circle cx="12.500" cy="10.500" r="1" fill="#b5cfe0"/><circle cx="13" cy="15.500" r="1" fill="#c2d6e6"/>
    <circle cx="2" cy="28.500" r="1.400" fill="#a3cddd"/><circle cx="7.500" cy="32.500" r="1.300" fill="#8fb6c9"/><circle cx="14.500" cy="32" r="1.200" fill="#b9d5e2"/>
    <circle cx="45.500" cy="6.500" r="2.200" fill="#93c6d2"/><circle cx="51" cy="16.500" r="2.400" fill="#8fd2dc"/><circle cx="51" cy="21" r="1" fill="#7fbfd0"/><circle cx="52" cy="29" r="1.600" fill="#8fbccd"/><circle cx="54" cy="32.500" r="1" fill="#a8cfdc"/><circle cx="17.500" cy="2" r="1.100" fill="#b0cbd9"/>
  </svg>
  <div class="lbl">小青助理</div>
</div>

<div id="wms">
<div class="wm" style="left:95.5px;top:55px">广东轻亿云软件科技有限公司</div>
<div class="wm" style="left:427.8px;top:55px">广东轻亿云软件科技有限公司</div>
<div class="wm" style="left:760.1px;top:55px">广东轻亿云软件科技有限公司</div>
<div class="wm" style="left:1092.4px;top:55px">广东轻亿云软件科技有限公司</div>
<div class="wm" style="left:1424.7px;top:55px">广东轻亿云软件科技有限公司</div>
<div class="wm" style="left:1757.0px;top:55px">广东轻亿云软件科技有限公司</div>
<div class="wm" style="left:95.5px;top:345px">广东轻亿云软件科技有限公司</div>
<div class="wm" style="left:427.8px;top:345px">广东轻亿云软件科技有限公司</div>
<div class="wm" style="left:760.1px;top:345px">广东轻亿云软件科技有限公司</div>
<div class="wm" style="left:1092.4px;top:345px">广东轻亿云软件科技有限公司</div>
<div class="wm" style="left:1424.7px;top:345px">广东轻亿云软件科技有限公司</div>
<div class="wm" style="left:1757.0px;top:345px">广东轻亿云软件科技有限公司</div>
<div class="wm" style="left:95.5px;top:635px">广东轻亿云软件科技有限公司</div>
<div class="wm" style="left:427.8px;top:635px">广东轻亿云软件科技有限公司</div>
<div class="wm" style="left:760.1px;top:635px">广东轻亿云软件科技有限公司</div>
<div class="wm" style="left:1092.4px;top:635px">广东轻亿云软件科技有限公司</div>
<div class="wm" style="left:1424.7px;top:635px">广东轻亿云软件科技有限公司</div>
<div class="wm" style="left:1757.0px;top:635px">广东轻亿云软件科技有限公司</div>
<div class="wm" style="left:95.5px;top:925px">广东轻亿云软件科技有限公司</div>
<div class="wm" style="left:427.8px;top:925px">广东轻亿云软件科技有限公司</div>
<div class="wm" style="left:760.1px;top:925px">广东轻亿云软件科技有限公司</div>
<div class="wm" style="left:1092.4px;top:925px">广东轻亿云软件科技有限公司</div>
<div class="wm" style="left:1424.7px;top:925px">广东轻亿云软件科技有限公司</div>
<div class="wm" style="left:1757.0px;top:925px">广东轻亿云软件科技有限公司</div>
</div>

</body>
</html>
